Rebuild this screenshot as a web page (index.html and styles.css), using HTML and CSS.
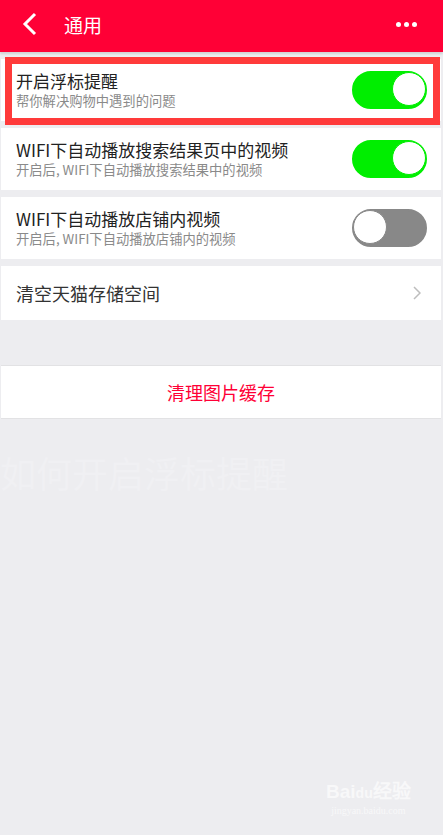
FILE: index.html
```html
<!DOCTYPE html>
<html lang="zh-CN">
<head>
    <meta charset="UTF-8">
    <meta name="viewport" content="width=device-width, initial-scale=1.0">
    <title>通用</title>
    <link rel="stylesheet" href="styles.css">
</head>
<body>
    <!-- Barra superior -->
    <header class="topbar">
        <svg class="back" width="16" height="24" viewBox="0 0 16 24">
            <path d="M13 2 L3 12 L13 22" fill="none" stroke="#fff" stroke-width="3"/>
        </svg>
        <span class="title">通用</span>
        <span class="more"><i></i><i></i><i></i></span>
    </header>

    <div class="list">
        <div class="row">
            <div class="text">
                <div class="name">开启浮标提醒</div>
                <div class="desc">帮你解决购物中遇到的问题</div>
            </div>
            <span class="switch on"></span>
        </div>
        <div class="row">
            <div class="text">
                <div class="name">WIFI下自动播放搜索结果页中的视频</div>
                <div class="desc">开启后, WIFI下自动播放搜索结果中的视频</div>
            </div>
            <span class="switch on"></span>
        </div>
        <div class="row">
            <div class="text">
                <div class="name">WIFI下自动播放店铺内视频</div>
                <div class="desc">开启后, WIFI下自动播放店铺内的视频</div>
            </div>
            <span class="switch"></span>
        </div>
        <div class="row short">
            <div class="name big">清空天猫存储空间</div>
            <svg class="arrow" width="8" height="14" viewBox="0 0 8 14">
                <path d="M1 1 L7 7 L1 13" fill="none" stroke="#bdbdbd" stroke-width="1.5"/>
            </svg>
        </div>
    </div>

    <div class="clear">清理图片缓存</div>

    <!-- marco rojo de resaltado -->
    <div class="highlight"></div>

    <div class="ghost">如何开启浮标提醒</div>
    <div class="mark">
        <div class="mark-logo">Bai<span class="paw">du</span>经验</div>
        <div class="mark-url">jingyan.baidu.com</div>
    </div>
</body>
</html>
```

FILE: styles.css
```css
body {
    margin: 0;
    height: 835px;
    background-color: #ededf0;
    font-family: "Noto Sans CJK SC", "Noto Sans", sans-serif;
    position: relative;
    overflow: hidden;
}

.topbar {
    height: 52px;
    box-sizing: border-box;
    padding: 0 26px 4px 22px;
    background-color: #ff0036;
    display: flex;
    align-items: center;
    box-shadow: 0 2px 2px rgba(0, 0, 0, 0.12);
    color: #fff;
}

.title {
    font-size: 19px;
    margin-left: 26px;
    flex: 1;
}

.more {
    display: flex;
    gap: 3px;
}

.more i {
    width: 5px;
    height: 5px;
    border-radius: 50%;
    background-color: #fff;
}

.list {
    display: flex;
    flex-direction: column;
    gap: 7px;
    padding: 7px 2px 0 1px;
}

.row {
    background-color: #fff;
    height: 62px;
    display: flex;
    align-items: center;
    padding: 0 14px 0 15px;
}

.row.short {
    height: 54px;
}

.text {
    flex: 1;
}

.name {
    font-size: 17px;
    line-height: 22px;
    color: #222;
    flex: 1;
}

.name.big {
    font-size: 18px;
    color: #333;
}

.desc {
    font-size: 13.3px;
    line-height: 18px;
    color: #8a8a8a;
}

.arrow {
    margin-right: 6px;
}

.switch {
    position: relative;
    width: 71px;
    height: 34px;
    border-radius: 19px;
    border: 2px solid #888;
    background-color: #888;
}

.switch::after {
    content: "";
    position: absolute;
    top: -1px;
    left: -1px;
    width: 34px;
    height: 34px;
    border-radius: 50%;
    background-color: #fff;
    border: 1px solid #888;
    box-sizing: border-box;
}

.switch.on {
    border-color: #00ee00;
    background-color: #00ee00;
}

.switch.on::after {
    left: auto;
    right: -1px;
    border-color: #00ee00;
}

.clear {
    margin: 45px 2px 0 1px;
    height: 54px;
    background-color: #fff;
    border-top: 1px solid #e2e2e4;
    border-bottom: 1px solid #e2e2e4;
    box-sizing: border-box;
    display: flex;
    align-items: center;
    justify-content: center;
    color: #ff0036;
    font-size: 18px;
}

.highlight {
    position: absolute;
    left: 5px;
    top: 57px;
    width: 435px;
    height: 68px;
    border: 7px solid #ff3a3a;
    box-sizing: border-box;
}

.ghost {
    position: absolute;
    left: 0;
    top: 446px;
    font-size: 36px;
    color: #f0f0f3;
}

.mark {
    position: absolute;
    left: 326px;
    top: 780px;
    color: #f8f8f9;
    text-align: center;
}

.mark-logo {
    font-family: "Liberation Sans", sans-serif;
    font-size: 19px;
    font-weight: bold;
    line-height: 24px;
}

.paw {
    font-size: 14px;
}

.mark-url {
    font-family: "Liberation Serif", serif;
    font-size: 10px;
    line-height: 12px;
}
```
